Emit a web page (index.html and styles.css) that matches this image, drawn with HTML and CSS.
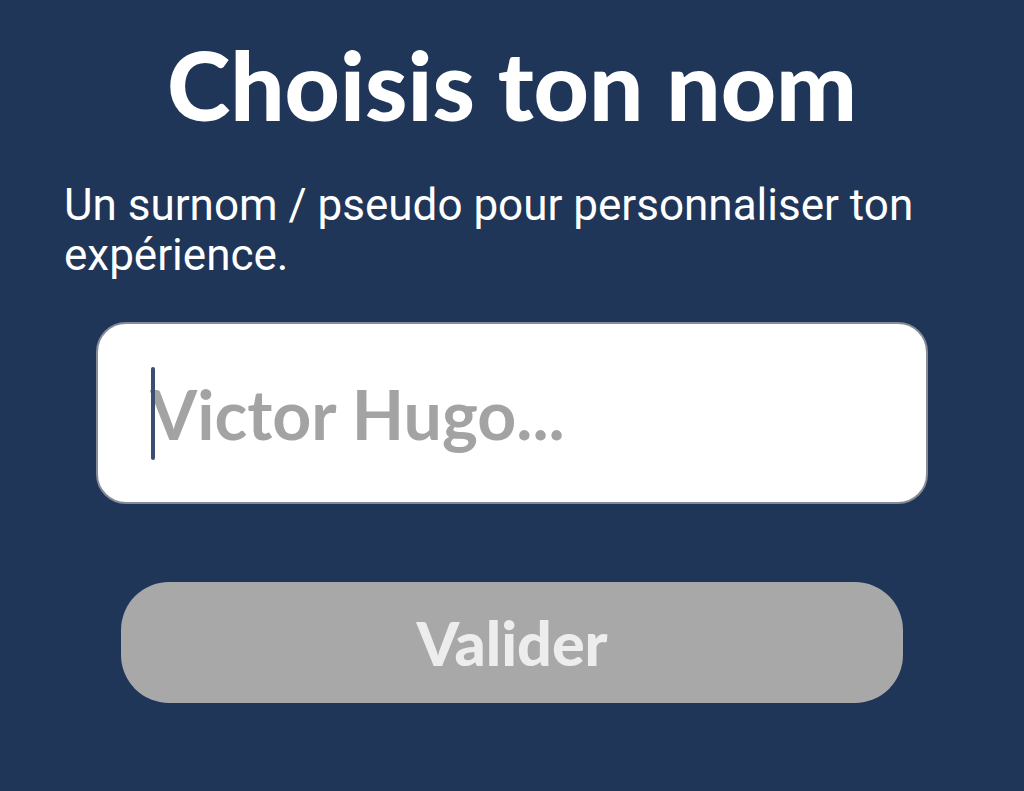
FILE: index.html
```html
<!DOCTYPE html>
<html lang="fr">
<head>
    <meta charset="UTF-8">
    <meta name="viewport" content="width=device-width, initial-scale=1.0">
    <title>Choisis ton nom</title>
    <link rel="stylesheet" href="styles.css">
</head>
<body>
    <div class="screen">
        <h1 class="title">Choisis ton nom</h1>
        <p class="subtitle">Un surnom / pseudo pour personnaliser ton expérience.</p>
        <div class="name-field">
            <span class="caret"></span>
            <input type="text" id="nickname" class="name-input" placeholder="Victor Hugo...">
        </div>
        <button class="submit-btn" disabled>Valider</button>
    </div>
</body>
</html>
```

FILE: styles.css
```css
html, body {
    margin: 0;
    padding: 0;
    background-color: #1f3659;
}

body {
    width: 1024px;
    height: 791px;
    overflow: hidden;
    font-family: Lato, "Open Sans", sans-serif;
}

.screen {
    display: flex;
    flex-direction: column;
    padding: 29px 0 0 0;
}

.title {
    margin: 0;
    text-align: center;
    color: #fff;
    font-size: 96px;
    font-weight: 900;
    line-height: 110px;
}

.subtitle {
    margin: 41px 40px 0 64px;
    color: #fff;
    font-family: Roboto, "Liberation Sans", sans-serif;
    font-size: 44px;
    line-height: 50px;
}

.name-field {
    position: relative;
    margin: 42px 0 0 96px;
    width: 832px;
    height: 182px;
    box-sizing: border-box;
    background: #fff;
    border: 2px solid #858b97;
    border-radius: 30px;
    display: flex;
    align-items: center;
}

.name-input {
    width: 100%;
    border: none;
    outline: none;
    background: transparent;
    padding: 0 0 0 52px;
    font-family: Lato, sans-serif;
    font-weight: 700;
    font-size: 68px;
    color: #333;
}

.name-input::placeholder {
    color: #a3a3a3;
}

.caret {
    position: absolute;
    left: 53px;
    top: 43px;
    width: 4px;
    height: 93px;
    border-radius: 2px;
    background: #3b4d70;
}

.submit-btn {
    margin: 78px 0 0 121px;
    width: 782px;
    height: 121px;
    border: none;
    border-radius: 48px;
    background: #a8a8a8;
    color: #ededed;
    font-family: Lato, sans-serif;
    font-weight: 900;
    font-size: 61px;
}
```
